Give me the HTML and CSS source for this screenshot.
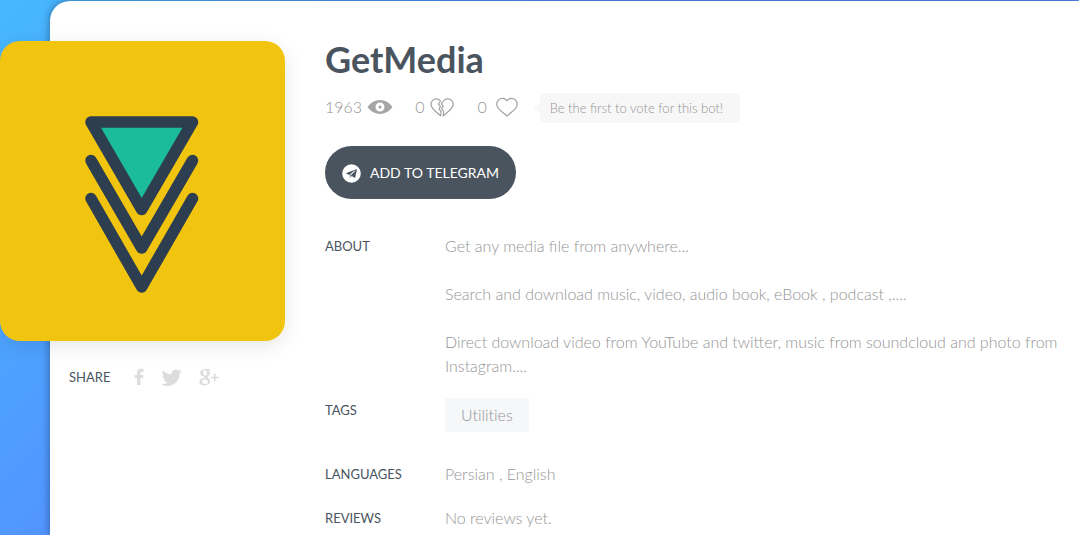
FILE: index.html
```html
<!DOCTYPE html>
<html lang="en">
<head>
  <meta charset="UTF-8">
  <meta name="viewport" content="width=device-width, initial-scale=1">
  <title>GetMedia</title>
  <link rel="stylesheet" href="styles.css">
</head>
<body>

  <main class="card">
    <aside class="sidebar">
      <svg class="avatar" viewBox="0 0 285 300" role="img" aria-label="GetMedia">
        <rect width="285" height="300" fill="#f1c40f"/>
        <g fill="none" stroke="#2c3e50" stroke-width="11.5" stroke-linecap="round" stroke-linejoin="round">
          <path d="M91 81H192.500L141.700 168.500Z" fill="#1abc9c"/>
          <path d="M91 119.500L141.700 207L192.500 119.500"/>
          <path d="M91 157.500L141.700 246L192.500 157.500"/>
        </g>
      </svg>

      <div class="share">
        <span class="label">Share</span>
        <a href="#" aria-label="Facebook">
          <svg width="10" height="18" viewBox="0 0 10 18"><path d="M9.500 1v3H7.800C6.700 4 6.400 4.500 6.400 5.400V7h3l-.4 3H6.400v7H3V10H.7V7H3V5C3 2.300 4.500.8 7 .8c1.200 0 2 .1 2.500.2z"/></svg>
        </a>
        <a href="#" aria-label="Twitter">
          <svg width="21" height="18" viewBox="0 0 21 18"><path d="M20.800 3.400c-.7.300-1.500.5-2.400.7.900-.5 1.500-1.300 1.800-2.300-.8.500-1.700.8-2.600 1A4.200 4.200 0 0 0 10.500 6.400C7 6.300 4 4.700 2 2.200.9 4.100 1.400 6.500 3.300 7.700c-.7 0-1.300-.2-1.900-.5 0 2 1.400 3.700 3.300 4.100-.6.200-1.200.2-1.900.1.500 1.700 2.100 2.800 3.900 2.900C5.100 15.700 2.700 16.500.3 16.200c7.500 4.600 18.300-.2 18.300-10.600.9-.6 1.600-1.400 2.200-2.200z"/></svg>
        </a>
        <a href="#" aria-label="Google Plus">
          <svg width="20" height="18" viewBox="0 0 20 18">
            <path fill-rule="evenodd" d="M11.800 1L10.200 2.200H9.400C10.300 3 10.800 3.900 10.800 5c0 1.700-.9 2.600-1.800 3.400-.7.600-.6 1 .1 1.500 1.200.9 2.100 1.800 2.100 3.200 0 2.400-2.300 4.300-5.700 4.300-3.100 0-5.100-1.300-5.100-3.500C.4 11.500 2.800 10.300 6 10.100 5.500 9.600 5.400 9.200 5.600 8.700 2.900 8.800 1.200 7.200 1.200 5.100 1.200 2.600 3.500 1 6.200 1zM5.700 2.100C4.300 2.200 3.700 3.300 4 4.800c.3 1.700 1.400 2.800 2.600 2.600 1.200-.1 1.800-1.300 1.500-2.800C7.800 3 6.800 2 5.700 2.100zM6.400 11.300c-2.200.1-3.500 1-3.500 2.400 0 1.300 1.300 2.300 3.300 2.300 1.700 0 2.800-.8 2.800-2 0-1.100-.8-1.700-2.600-2.700z"/>
            <path d="M15 5.500h1.500v3.200h3.200v1.500h-3.200v3.200H15v-3.200h-3.200V8.700H15z"/>
          </svg>
        </a>
      </div>
    </aside>

    <section class="content">
      <h1 class="title">GetMedia</h1>

      <div class="stats">
        <span class="stat">1963
          <svg width="26" height="20" viewBox="0 0 26 20" aria-hidden="true"><path fill="#a6a6a6" fill-rule="evenodd" d="M.5 10Q5.500 3 13 3t12.500 7q-5 7-12.500 7T.5 10zM13 5.500a4.500 4.500 0 1 0 0 9 4.500 4.500 0 0 0 0-9zm0 3a1.500 1.500 0 1 1 0 3 1.500 1.500 0 0 1 0-3z"/></svg>
        </span>
        <button class="stat" type="button" aria-label="Vote down">0
          <svg width="26" height="20" viewBox="-1 0 26 20" aria-hidden="true"><g class="line"><path d="M10.500 4C8.800 1.700 5 1 2.700 3.300.5 5.500.8 8.800 2.500 11.200c2 2.700 5 4.800 8.100 7.600l.5-4-2-2.800 1.400-2.700-2.200-2.300z"/><path d="M13.500 4C15.200 1.700 19 1 21.500 3.300c2.200 2.200 1.900 5.500.1 7.900-2 2.800-5.200 4.900-8.400 7.600l.4-4.300-2-2.700 1.500-2.700-1.700-2.400z"/></g></svg>
        </button>
        <button class="stat" type="button" aria-label="Vote up">0
          <svg width="26" height="20" viewBox="-4 0 26 20" aria-hidden="true"><path class="line" d="M11 3.800C9.300.9 5 .6 2.700 2.900.4 5.200.4 8.200 2 10.700c1.800 2.900 5.600 5 9 8.400 3.400-3.400 7.200-5.500 9-8.400 1.600-2.500 1.600-5.500-.7-7.800C17 .6 12.700.9 11 3.800z"/></svg>
        </button>
        <span class="hint">Be the first to vote for this bot!</span>
      </div>

      <a class="add-btn" href="#">
        <svg width="19" height="19" viewBox="0 0 19 19" aria-hidden="true"><circle cx="9.500" cy="9.500" r="9.300" fill="#fff"/><path fill="#4a545e" d="M3.800 9.300L14.300 5.200q.7-.2.600.6L13.200 13.400q-.2.700-.9.300L9.800 11.900 8.500 13.500q-.5.400-.6-.3L7.500 10.900z"/><path d="M7.600 11L12.800 6.800L8.300 11.500V13.300" fill="none" stroke="#fff" stroke-width=".8"/></svg>
        Add to Telegram
      </a>

      <dl class="details">
        <dt class="label">About</dt>
        <dd class="about">
          <p>Get any media file from anywhere...</p>
          <p>Search and download music, video, audio book, eBook , podcast ,....</p>
          <p>Direct download video from YouTube and twitter, music from soundcloud and photo from Instagram....</p>
        </dd>

        <dt class="label">Tags</dt>
        <dd class="tags"><a class="tag" href="#">Utilities</a></dd>

        <dt class="label">Languages</dt>
        <dd>Persian , English</dd>

        <dt class="label">Reviews</dt>
        <dd>No reviews yet.</dd>
      </dl>
    </section>
  </main>

</body>
</html>
```

FILE: styles.css
```css
* {
  box-sizing: border-box;
}

body {
  margin: 0;
  padding: 1px 0 0 50px;
  min-height: 100vh;
  overflow: hidden;
  background: linear-gradient(135deg, #47b8ff 0, #5294ff 420px, #5294ff);
  font-family: Lato, sans-serif;
  font-size: 16px;
  font-weight: 300;
  line-height: 24px;
  color: #959595;
}

a {
  color: inherit;
  text-decoration: none;
}

svg {
  display: block;
  flex: none;
}

.card {
  display: flex;
  align-items: flex-start;
  gap: 40px;
  min-height: 100vh;
  padding: 40px 10px 0 0;
  background: #fff;
  border-radius: 20px 0 0 0;
  box-shadow: 0 0 8px rgba(0, 0, 0, 0.4);
}

/* avatar hangs over the left edge of the card */
.sidebar {
  flex: none;
  width: 285px;
  margin-left: -50px;
}

.avatar {
  width: 100%;
  border-radius: 20px;
  box-shadow: 0 5px 20px rgba(0, 0, 0, 0.1);
}

.share {
  display: flex;
  align-items: center;
  padding: 24px 0 0 69px;
}

.share .label {
  margin-right: 24px;
}

.share a {
  margin-right: 17px;
}

.share svg {
  fill: #dcdcdc;
}

.label {
  font-size: 13px;
  font-weight: 400;
  color: #4a545e;
  text-transform: uppercase;
}

.content {
  flex: 1;
  min-width: 0;
}

.title {
  margin: 0;
  font-size: 36px;
  font-weight: 700;
  line-height: 36px;
  color: #4a545e;
}

.stats {
  display: flex;
  align-items: center;
  gap: 22px;
  margin-top: 16px;
}

.stat {
  display: flex;
  align-items: center;
  gap: 5px;
  padding: 0 0 2px;
  border: 0;
  background: none;
  font: inherit;
  color: inherit;
}

.line {
  fill: none;
  stroke: #a0a0a0;
  stroke-width: 1.2;
  stroke-linejoin: round;
}

.hint {
  position: relative;
  width: 200px;
  padding: 3px 10px;
  border-radius: 5px;
  background: #f7f7f7;
  font-size: 13px;
}

.hint::before {
  content: "";
  position: absolute;
  top: 9px;
  left: -6px;
  border: 6px solid transparent;
  border-right-color: #f7f7f7;
  border-left: 0;
}

.add-btn {
  display: inline-flex;
  align-items: center;
  gap: 9px;
  margin-top: 23px;
  padding: 15px 17px 14px;
  border-radius: 27px;
  background: #4a545e;
  color: #fff;
  font-size: 14px;
  font-weight: 400;
  text-transform: uppercase;
}

.details {
  display: grid;
  grid-template-columns: 120px 1fr;
  row-gap: 20px;
  margin: 35px 0 0;
}

.details dd {
  margin: 0;
}

.about p {
  margin: 0 0 24px;
}

.about p:last-child {
  margin-bottom: 0;
}

.tags {
  padding-bottom: 10px;
}

.tag {
  display: inline-block;
  padding: 5px 16px;
  border-radius: 2px;
  background: #f5f7f9;
  font-variant-ligatures: none;
}
```
